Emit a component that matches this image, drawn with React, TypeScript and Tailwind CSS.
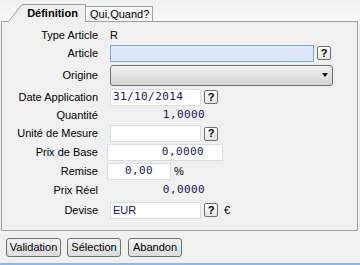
import React from 'react';

const mono = "font-['DejaVu_Sans_Mono',monospace] text-[11px] tracking-[0.4px] text-[#14145e]";

const Help = () => (
  <span className="ml-[3px] flex h-[14px] w-[14px] items-center justify-center rounded-[2px] border border-[#6f6f6f] bg-linear-to-b from-white to-[#e4e4e4] text-[11px] font-bold leading-none text-black">
    ?
  </span>
);

const Row = ({ label, className, children }: { label: string; className: string; children?: React.ReactNode }) => (
  <div className={`flex items-center ${className}`}>
    <div className="w-[96px] shrink-0 text-right">{label}</div>
    {children}
  </div>
);

const Field = ({ className, children }: { className: string; children?: React.ReactNode }) => (
  <div className={`flex h-[17px] items-center border border-[#d9dde4] bg-white ${className}`}>{children}</div>
);

const App = () => {
  return (
    <div className="h-[265px] w-[360px] overflow-hidden bg-[#f0f0f0] font-['Liberation_Sans',Arial,sans-serif] text-[11px] text-black">
      {/* Tabs */}
      <div className="flex h-[21px] items-end bg-linear-to-b from-[#f0f0f0] to-[#fafafa] pl-[8px]">
        <div className="relative z-10 -mb-px flex h-[18px]">
          <svg width="14" height="18" viewBox="0 0 14 18" className="block">
            <polygon points="0,18 14,0 14,18" fill="#f0f0f0" />
            <line x1="0.5" y1="17.5" x2="14" y2="0.5" stroke="#a0a0a0" strokeWidth="1" />
          </svg>
          <div className="flex w-[64px] items-center justify-center border-t border-r border-[#a0a0a0] bg-[#f0f0f0] pr-[2px] font-bold">
            Définition
          </div>
        </div>
        <div className="flex h-[15px] w-[67px] items-center border-t border-r border-[#a0a0a0] bg-[#f8f8f8] pl-[4px]">
          Qui,Quand?
        </div>
      </div>

      {/* Panel */}
      <div className="ml-[1px] w-[357px] border border-[#a0a0a0] pt-[4px] pb-[10px]">
        <Row label="Type Article" className="h-[18px]">
          <span className="ml-[12px]">R</span>
        </Row>
        <Row label="Article" className="h-[18px]">
          <div className="ml-[12px] h-[17px] w-[204px] border border-[#7eaadf] bg-[#dde7fb]" />
          <Help />
        </Row>
        <Row label="Origine" className="h-[26px]">
          <div className="ml-[12px] flex h-[21px] w-[223px] items-center justify-end rounded-[3px] border border-[#707070] bg-linear-to-b from-[#f4f4f4] to-[#d2d2d2] pr-[4px]">
            <span className="h-0 w-0 border-x-[3px] border-t-[4px] border-x-transparent border-t-black" />
          </div>
        </Row>
        <Row label="Date Application" className="h-[18px]">
          <Field className="ml-[12px] w-[91px] pl-[2px]">
            <span className={mono}>31/10/2014</span>
          </Field>
          <Help />
        </Row>
        <Row label="Quantité" className="h-[18px]">
          <span className={`ml-[12px] w-[95px] text-right ${mono}`}>1,0000</span>
        </Row>
        <Row label="Unité de Mesure" className="h-[19px]">
          <Field className="ml-[12px] w-[91px]" />
          <Help />
        </Row>
        <Row label="Prix de Base" className="h-[19px]">
          <Field className="ml-[9px] w-[116px] justify-end pr-[18px]">
            <span className={mono}>0,0000</span>
          </Field>
        </Row>
        <Row label="Remise" className="h-[19px]">
          <Field className="ml-[9px] w-[64px] justify-end pr-[17px]">
            <span className={mono}>0,00</span>
          </Field>
          <span className="ml-[3px]">%</span>
        </Row>
        <Row label="Prix Réel" className="h-[19px]">
          <span className={`ml-[12px] w-[95px] text-right ${mono}`}>0,0000</span>
        </Row>
        <Row label="Devise" className="h-[20px]">
          <Field className="ml-[12px] w-[91px] pl-[2px]">
            <span className="text-[#14145e]">EUR</span>
          </Field>
          <Help />
          <span className="ml-[6px]">€</span>
        </Row>
      </div>

      {/* Buttons */}
      <div className="mt-[7px] flex pl-[6px]">
        <button className="h-[19px] w-[55px] rounded-[3px] border border-[#707070] bg-linear-to-b from-[#f3f3f3] to-[#dcdcdc]">
          Validation
        </button>
        <button className="ml-[6px] h-[19px] w-[54px] rounded-[3px] border border-[#707070] bg-linear-to-b from-[#f3f3f3] to-[#dcdcdc]">
          Sélection
        </button>
        <button className="ml-[7px] h-[19px] w-[54px] rounded-[3px] border border-[#707070] bg-linear-to-b from-[#f3f3f3] to-[#dcdcdc]">
          Abandon
        </button>
      </div>

      <div className="mt-[6px] h-[2px] bg-[#8fb6ea]" />
    </div>
  );
};

export default App;
